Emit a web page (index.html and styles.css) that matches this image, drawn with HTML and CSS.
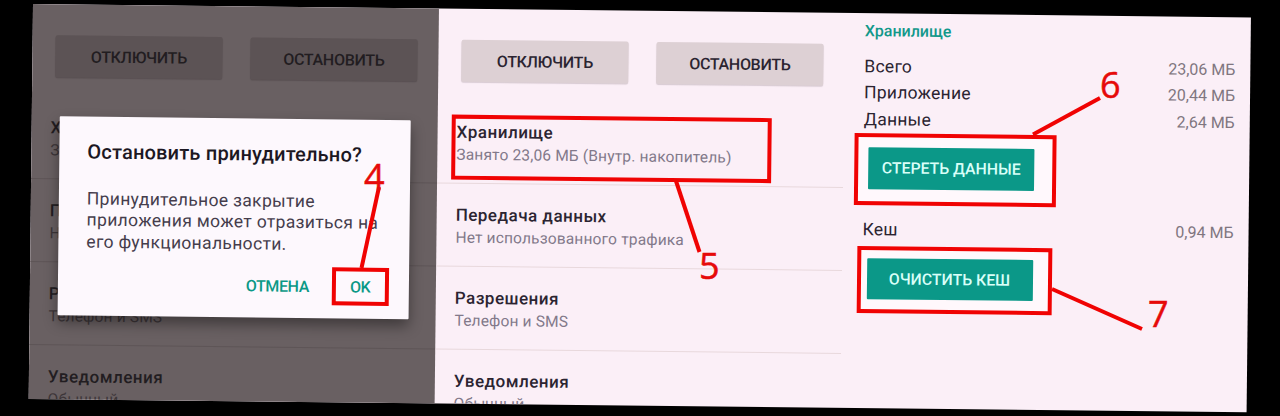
FILE: index.html
```html
<!DOCTYPE html>
<html lang="ru">
<head>
<meta charset="utf-8">
<title>Настройки приложения</title>
<link rel="stylesheet" href="styles.css">
</head>
<body>
<main class="board">
  <section class="panel panel-dim">
    <div class="actions"><div class="btn">ОТКЛЮЧИТЬ</div><div class="btn">ОСТАНОВИТЬ</div></div>
    <div class="row"><div class="title">Хранилище</div><div class="sub">Занято</div></div>
    <div class="row"><div class="title">Передача</div><div class="sub">Нет</div></div>
    <div class="row"><div class="title">Разрешения</div><div class="sub">Телефон и SMS</div></div>
    <div class="row"><div class="title">Уведомления</div><div class="sub">Обычный</div></div>
    <div class="dialog">
      <div class="dialog-title">Остановить принудительно?</div>
      <div class="dialog-text">Принудительное закрытие<br>приложения может отразиться на<br>его функциональности.</div>
      <div class="dialog-actions"><span class="cancel">ОТМЕНА</span><span class="ok">OK</span></div>
    </div>
  </section>
  <section class="panel">
    <div class="actions"><div class="btn">ОТКЛЮЧИТЬ</div><div class="btn">ОСТАНОВИТЬ</div></div>
    <div class="row row-storage"><div class="title">Хранилище</div><div class="sub">Занято 23,06 МБ (Внутр. накопитель)</div></div>
    <div class="row"><div class="title">Передача данных</div><div class="sub">Нет использованного трафика</div></div>
    <div class="row"><div class="title">Разрешения</div><div class="sub">Телефон и SMS</div></div>
    <div class="row"><div class="title">Уведомления</div><div class="sub">Обычный</div></div>
  </section>
  <section class="panel panel-storage">
    <div class="heading">Хранилище</div>
    <div class="line"><span>Всего</span><span class="value">23,06 МБ</span></div>
    <div class="line"><span>Приложение</span><span class="value">20,44 МБ</span></div>
    <div class="line"><span>Данные</span><span class="value">2,64 МБ</span></div>
    <div class="frame frame-data"><div class="teal">СТЕРЕТЬ ДАННЫЕ</div></div>
    <div class="line"><span>Кеш</span><span class="value">0,94 МБ</span></div>
    <div class="frame frame-cache"><div class="teal">ОЧИСТИТЬ КЕШ</div></div>
  </section>
</main>
<svg class="marks" width="1280" height="416" viewBox="0 0 1280 416">
  <g class="pointer">
    <path d="M379 187L361.5 268"/>
    <path d="M676 181L699.500 252"/>
    <path d="M1033 134.500L1100 98"/>
    <path d="M1052 289L1142 329"/>
  </g>
  <g class="digits">
    <text x="364" y="190">4</text>
    <text x="699" y="279">5</text>
    <text x="1100" y="98">6</text>
    <text x="1148" y="327">7</text>
  </g>
</svg>
</body>
</html>
```
FILE: styles.css
```css
*, *::after { box-sizing: border-box; }
body { margin: 0; height: 416px; overflow: hidden; background: #000; font-family: Roboto, "Liberation Sans", sans-serif; color: #2b2431; }
.board { display: flex; width: 1218px; height: 395px; margin: 3.600px 0 0 33px; transform-origin: 0 0; transform: rotate(.63deg); background: #fbeff7; overflow: hidden; }
.panel { position: relative; width: 406px; height: 395px; flex: none; overflow: hidden; }
.actions { display: flex; gap: 28px; height: 91.500px; padding: 30.500px 0 0 23px; }
.btn { width: 167px; height: 42px; line-height: 43px; text-align: center; font-size: 16px; letter-spacing: -.3px; font-weight: 500; background: #ddd0d4; border-radius: 2px; box-shadow: 0 1px 1px rgba(80,60,70,.2); white-space: nowrap; }
.row { height: 83.2px; padding: 20px 0 0 19px; border-bottom: 1px solid #e8d8dc; white-space: nowrap; }
.title { font-size: 17px; line-height: 23px; font-weight: 500; letter-spacing: .5px; }
.sub { font-size: 15.500px; line-height: 23px; letter-spacing: .17px; color: #82798a; }
.row-storage { position: relative; }
.row-storage::after { content: ""; position: absolute; left: 14px; top: 14.500px; width: 320px; height: 65px; border: 4px solid #f00303; }

.panel-dim { background: #696062; color: #221d21; }
.panel-dim .btn { background: #5c5355; box-shadow: 0 1px 1px rgba(30,20,25,.2); }
.panel-dim .row { border-color: #5e5557; }
.panel-dim .sub { color: #3d3639; }
.dialog { position: absolute; left: 28px; top: 112px; width: 351px; height: 198.500px; padding: 23px 0 0 28px; background: #fdf8fd; box-shadow: 0 7px 14px rgba(0,0,0,.4); border-radius: 1px; white-space: nowrap; }
.dialog-title { font-size: 20px; line-height: 24px; font-weight: 500; letter-spacing: .2px; color: #1c1722; }
.dialog-text { margin-top: 24.500px; font-size: 17.500px; line-height: 21.500px; letter-spacing: .33px; color: #453d4c; }
.dialog-actions { display: flex; justify-content: flex-end; align-items: center; gap: 22.500px; margin: 12px 20px 0 0; font-size: 16px; font-weight: 500; letter-spacing: -.4px; color: #0b9886; }
.ok { width: 57.500px; height: 38px; line-height: 31px; border: 4px solid #f00303; text-align: center; }

.panel-storage { padding: 6px 15px 0 20px; }
.heading { font-size: 16px; line-height: 24px; font-weight: 500; color: #12988a; margin-bottom: 9.500px; }
.line { display: flex; justify-content: space-between; font-size: 17.500px; line-height: 26.500px; height: 26.500px; letter-spacing: .25px; }
.value { font-size: 16px; letter-spacing: 0; color: #80767f; }
.frame { border: 4px solid #f00303; background: #fff8fc; }
.frame-data { width: 202px; height: 72.500px; margin: .5px 0 11px -9.500px; padding: 10.500px 0 0 10.500px; }
.frame-cache { width: 194.500px; height: 67px; margin: 3px 0 0 -5px; padding: 8px 0 0 5.500px; }
.teal { width: 166px; height: 41.500px; line-height: 42px; background: #0b9888; color: #d9fff8; text-align: center; font-size: 15.800px; font-weight: 500; border-radius: 1px; white-space: nowrap; }

.marks { position: absolute; left: 0; top: 0; }
.pointer { fill: none; stroke: #f00303; stroke-width: 4; }
.digits { fill: #e60a0a; stroke: #e60a0a; stroke-width: .5px; font: 36px "Open Sans", "Noto Sans", sans-serif; }
```
